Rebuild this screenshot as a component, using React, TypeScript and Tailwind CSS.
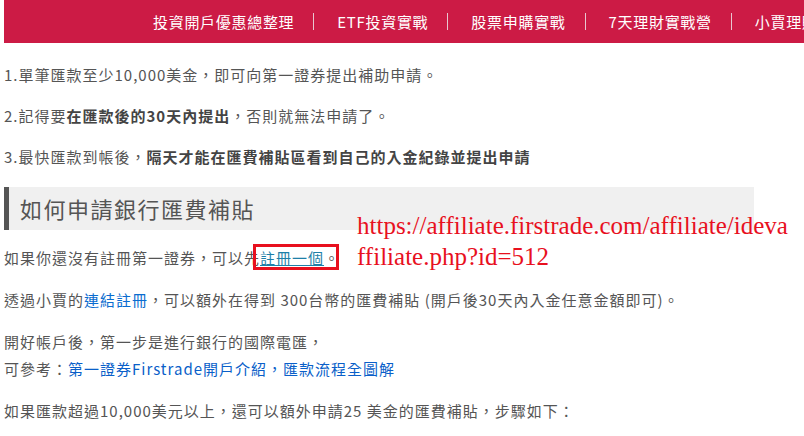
import React from 'react';

const navItems = ['投資開戶優惠總整理', 'ETF投資實戰', '股票申購實戰', '7天理財實戰營', '小賈理財'];

const App: React.FC = () => {
  return (
    <div
      className="relative w-[804px] h-[436px] overflow-hidden bg-white text-[#555] pl-[4px]"
      style={{ fontFamily: '"Noto Sans CJK TC", "Noto Sans", sans-serif' }}
    >
      <header className="h-[43px] bg-[#cc1b45] flex items-center pl-[149px] whitespace-nowrap overflow-hidden">
        {navItems.map((item, i) => (
          <div key={item} className="flex items-center">
            {i > 0 && <span className="w-px h-[17px] bg-[#e8c6cf] ml-[19px] mr-[23px]" />}
            <span className="text-white text-[15px] tracking-[0.7px] leading-[20px]">{item}</span>
          </div>
        ))}
      </header>

      <main className="pt-[18px] text-[15px] tracking-[1px] leading-[27px] text-[#555]">
        <p className="mb-[14px]">1.單筆匯款至少10,000美金，即可向第一證券提出補助申請。</p>
        <p className="mb-[14px]">
          2.記得要<strong className="font-bold text-[#444]">在匯款後的30天內提出</strong>，否則就無法申請了。
        </p>
        <p>
          3.最快匯款到帳後，<strong className="font-bold text-[#444]">隔天才能在匯費補貼區看到自己的入金紀錄並提出申請</strong>
        </p>

        <h2 className="mt-[17px] w-[750px] h-[43px] bg-[#f0f0f0] border-l-[5px] border-[#555] flex items-center pl-[11px] text-[22px] tracking-[1.5px] font-normal text-[#555]">
          如何申請銀行匯費補貼
        </h2>

        <p className="mt-[14px] mb-[15px]">
          如果你還沒有註冊第一證券，可以先<a className="text-[#1e7fa8] underline">註冊一個</a>。
        </p>
        <p className="mb-[15px]">
          透過小賈的<a className="text-[#0a6ccf]">連結註冊</a>，可以額外在得到 300台幣的匯費補貼 (開戶後30天內入金任意金額即可)。
        </p>
        <p>開好帳戶後，第一步是進行銀行的國際電匯，</p>
        <p className="mb-[15px]">
          可參考：<a className="text-[#0a5fc9]">第一證券Firstrade開戶介紹，匯款流程全圖解</a>
        </p>
        <p>如果匯款超過10,000美元以上，還可以額外申請25 美金的匯費補貼，步驟如下：</p>
      </main>

      <div className="absolute left-[253px] top-[244px] w-[86px] h-[26px] border-[3px] border-[#e8101e]" />

      <div
        className="absolute left-[357px] top-[210px] text-[25px] leading-[31px] text-[#e8101e] whitespace-nowrap"
        style={{ fontFamily: '"Liberation Serif", serif' }}
      >
        <span className="block">https://affiliate.firstrade.com/affiliate/ideva</span>
        <span className="block">ffiliate.php?id=512</span>
      </div>
    </div>
  );
};

export default App;
